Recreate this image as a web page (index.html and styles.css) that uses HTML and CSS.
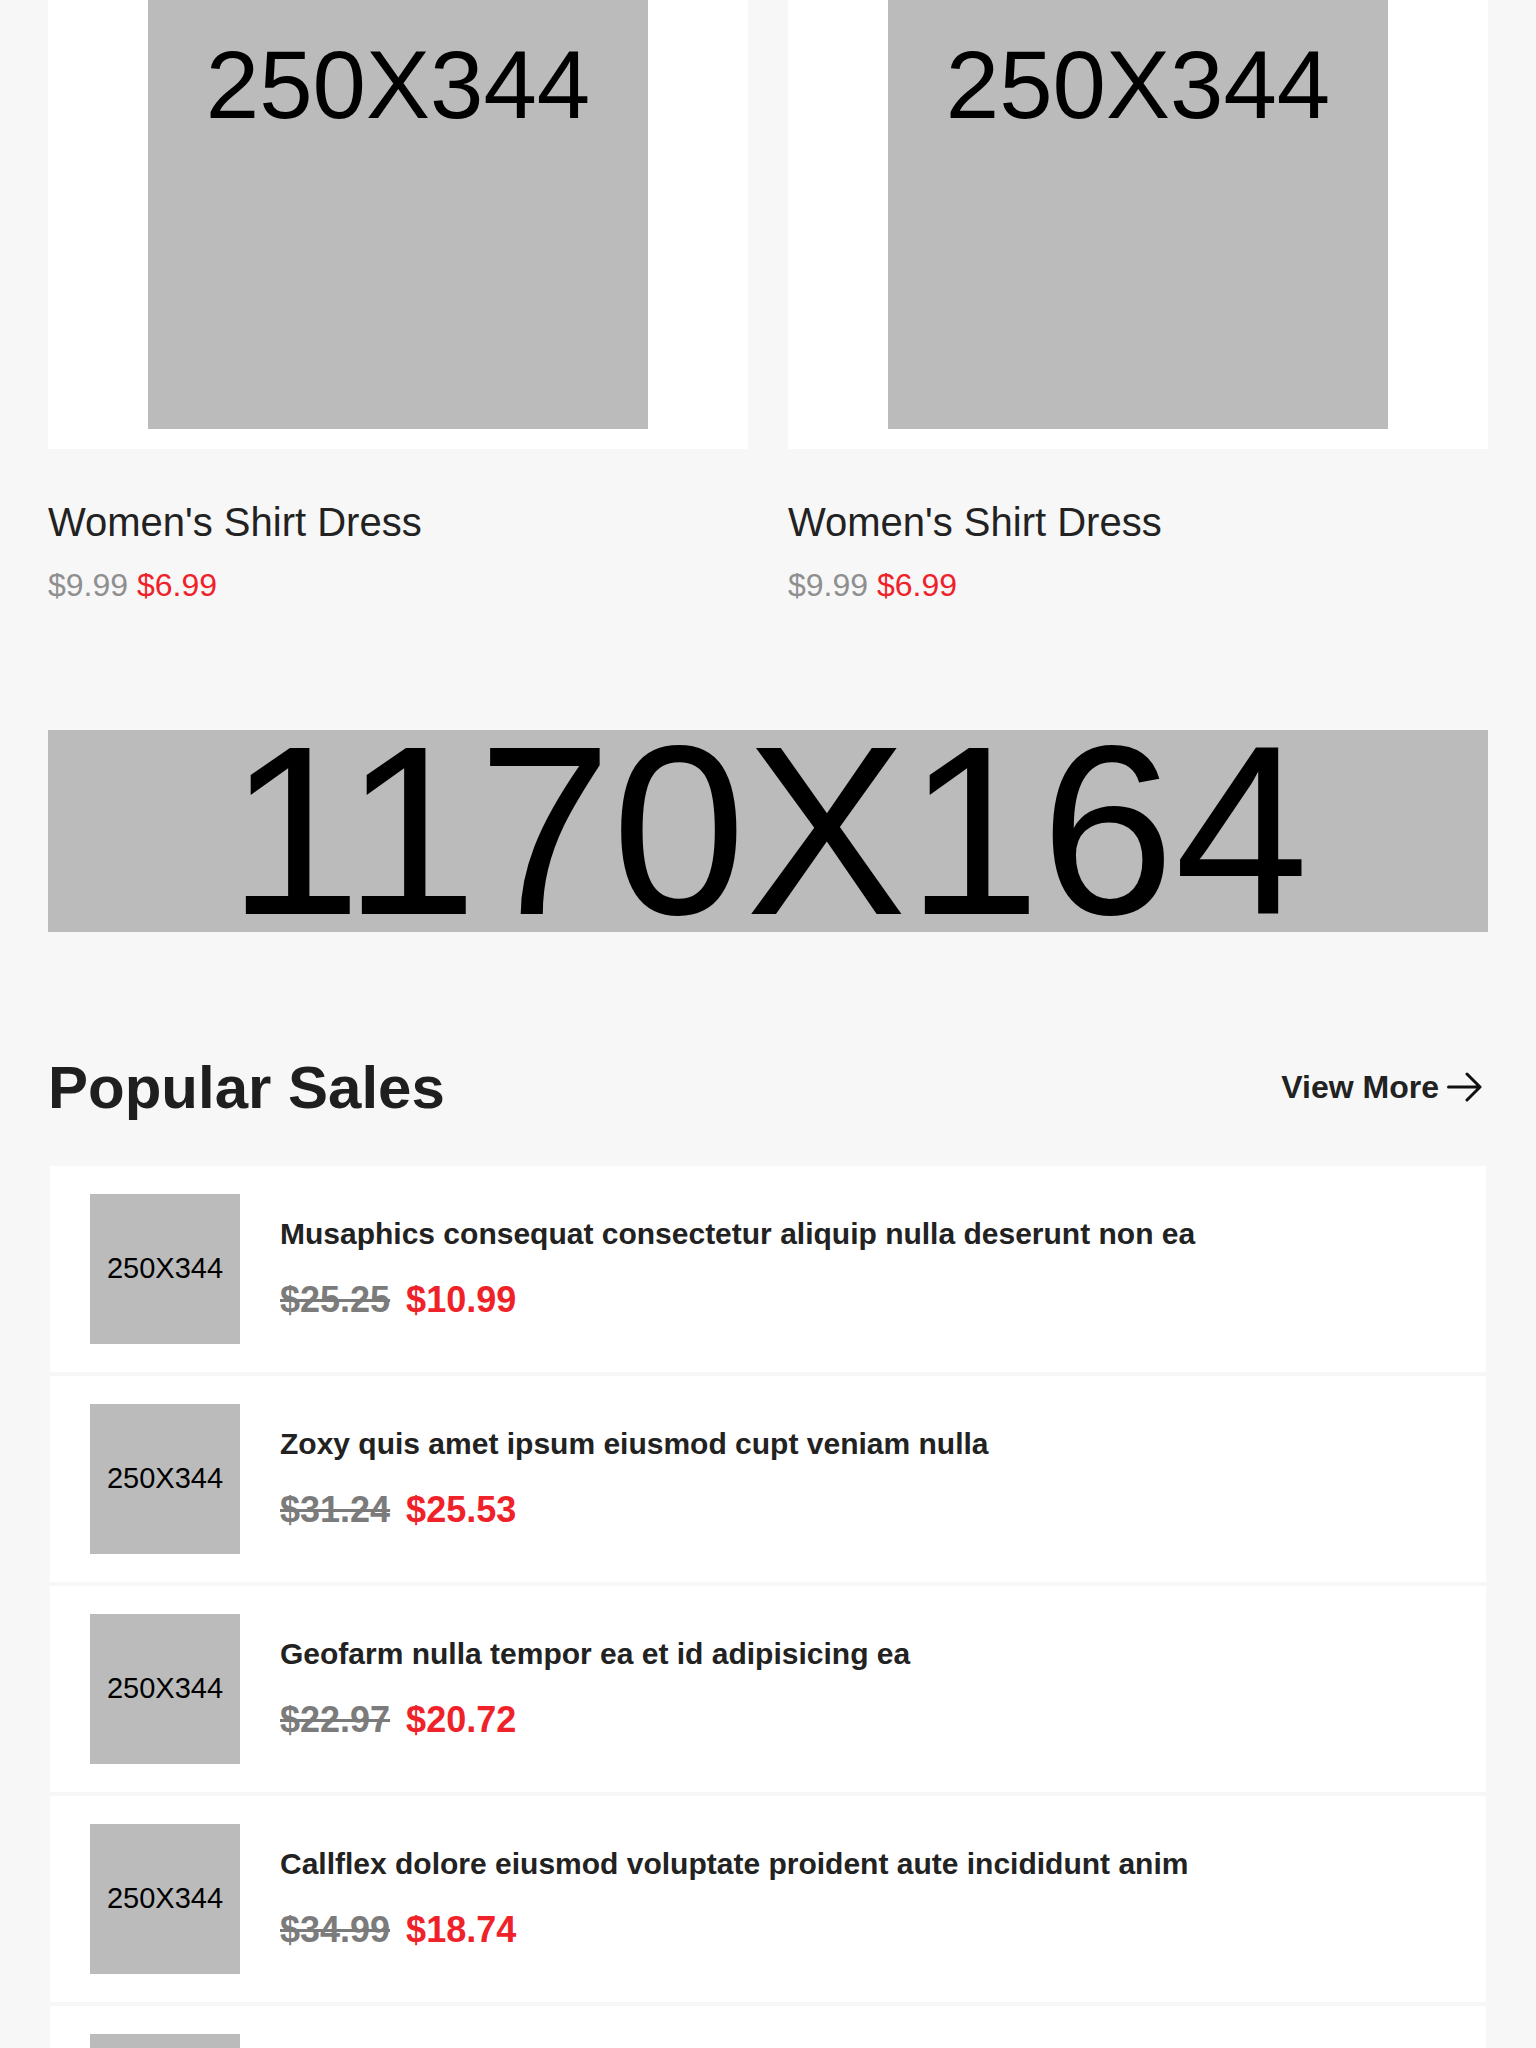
FILE: index.html
```html
<!DOCTYPE html>
<html lang="en">
<head>
<meta charset="utf-8">
<title>Shop</title>
<link rel="stylesheet" href="styles.css">
</head>
<body>
<div class="page">
  <section class="products">
    <article class="product">
      <div class="product-frame"><div class="ph ph-product">250X344</div></div>
      <h3 class="product-name">Women's Shirt Dress</h3>
      <div class="product-price"><span class="was">$9.99</span> <span class="now">$6.99</span></div>
    </article>
    <article class="product">
      <div class="product-frame"><div class="ph ph-product">250X344</div></div>
      <h3 class="product-name">Women's Shirt Dress</h3>
      <div class="product-price"><span class="was">$9.99</span> <span class="now">$6.99</span></div>
    </article>
  </section>

  <div class="banner ph">1170X164</div>

  <section class="popular">
    <div class="popular-head">
      <h2 class="popular-title">Popular Sales</h2>
      <a class="view-more" href="#">View More
        <svg class="arrow" width="36" height="30" viewBox="0 0 36 30" aria-hidden="true">
          <path d="M1.5 15 H33 M20 2 L33 15 L20 28" fill="none" stroke="#111" stroke-width="3" stroke-linecap="round" stroke-linejoin="round"/>
        </svg>
      </a>
    </div>
    <ul class="sale-list">
      <li class="sale">
        <div class="ph ph-thumb">250X344</div>
        <div class="sale-info">
          <h4 class="sale-name">Musaphics consequat consectetur aliquip nulla deserunt non ea</h4>
          <div class="sale-price"><span class="old">$25.25</span><span class="new">$10.99</span></div>
        </div>
      </li>
      <li class="sale">
        <div class="ph ph-thumb">250X344</div>
        <div class="sale-info">
          <h4 class="sale-name">Zoxy quis amet ipsum eiusmod cupt veniam nulla</h4>
          <div class="sale-price"><span class="old">$31.24</span><span class="new">$25.53</span></div>
        </div>
      </li>
      <li class="sale">
        <div class="ph ph-thumb">250X344</div>
        <div class="sale-info">
          <h4 class="sale-name">Geofarm nulla tempor ea et id adipisicing ea</h4>
          <div class="sale-price"><span class="old">$22.97</span><span class="new">$20.72</span></div>
        </div>
      </li>
      <li class="sale">
        <div class="ph ph-thumb">250X344</div>
        <div class="sale-info">
          <h4 class="sale-name">Callflex dolore eiusmod voluptate proident aute incididunt anim</h4>
          <div class="sale-price"><span class="old">$34.99</span><span class="new">$18.74</span></div>
        </div>
      </li>
      <li class="sale">
        <div class="ph ph-thumb">250X344</div>
        <div class="sale-info">
          <h4 class="sale-name">Trollery magna labore excepteur sunt officia</h4>
          <div class="sale-price"><span class="old">$19.99</span><span class="new">$12.49</span></div>
        </div>
      </li>
    </ul>
  </section>
</div>
</body>
</html>
```

FILE: styles.css
```css
* { box-sizing: border-box; }

html, body {
  margin: 0;
  padding: 0;
  background: #f7f7f7;
}

body {
  font-family: "Liberation Sans", Arial, sans-serif;
  color: #222;
  overflow: hidden;
}

.page {
  padding: 0 48px 40px;
  margin-top: -279px;
}

/* placeholder image */
.ph {
  background: #bbbbbb;
  color: #000;
  display: flex;
  align-items: center;
  justify-content: center;
  font-family: "Liberation Sans", Arial, sans-serif;
  white-space: nowrap;
}

/* product grid */
.products {
  display: grid;
  grid-template-columns: 1fr 1fr;
  gap: 40px;
}

.product-frame {
  background: #fff;
  padding: 20px 0;
  display: flex;
  justify-content: center;
}

.ph-product {
  width: 500px;
  height: 688px;
  font-size: 96px;
}

.product-name {
  margin: 50px 0 0;
  font-size: 40px;
  line-height: 46px;
  font-weight: 400;
  color: #222;
}

.product-price {
  margin-top: 22px;
  font-size: 32px;
  line-height: 36px;
}

.product-price .was { color: #8f8f8f; }
.product-price .now { color: #ef2229; }

/* banner */
.banner {
  margin-top: 127px;
  width: 100%;
  aspect-ratio: 1170 / 164;
  font-size: 241px;
  line-height: 0.8;
}

/* popular sales */
.popular { margin-top: 121px; }

.popular-head {
  display: flex;
  align-items: center;
  justify-content: space-between;
}

.popular-title {
  margin: 0;
  font-size: 60px;
  line-height: 69px;
  font-weight: 700;
  color: #1f1f1f;
}

.view-more {
  display: flex;
  align-items: center;
  gap: 8px;
  font-size: 32px;
  line-height: 37px;
  font-weight: 700;
  color: #222;
  text-decoration: none;
  margin-right: 5px;
}

.arrow { display: block; }

.sale-list {
  list-style: none;
  margin: 44px 0 0;
  padding: 0 2px;
  display: flex;
  flex-direction: column;
  gap: 4px;
}

.sale {
  background: #fff;
  padding: 28px 40px;
  display: flex;
  align-items: center;
  gap: 40px;
}

.ph-thumb {
  width: 150px;
  height: 150px;
  flex: none;
  font-size: 29px;
}

.sale-name {
  margin: 0;
  font-size: 30px;
  line-height: 34px;
  font-weight: 700;
  color: #222;
}

.sale-price {
  margin-top: 28px;
  display: flex;
  gap: 16px;
  font-size: 36px;
  line-height: 41px;
  font-weight: 700;
}

.sale-price .old {
  color: #7b7b7b;
  text-decoration: line-through;
}

.sale-price .new { color: #ef2229; }
```
